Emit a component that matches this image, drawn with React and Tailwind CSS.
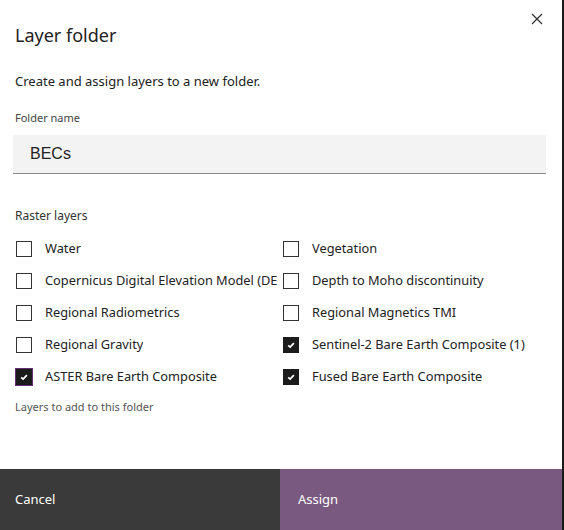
import { useState } from "react";

const layers = [
  ["Water", false, "Vegetation", false],
  ["Copernicus Digital Elevation Model (DEM)", false, "Depth to Moho discontinuity", false],
  ["Regional Radiometrics", false, "Regional Magnetics TMI", false],
  ["Regional Gravity", false, "Sentinel-2 Bare Earth Composite (1)", true],
  ["ASTER Bare Earth Composite", true, "Fused Bare Earth Composite", true],
];

function Check({ checked, focused }) {
  return (
    <span
      className={`w-4 h-4 shrink-0 flex items-center justify-center ${
        checked ? "bg-[#1b1b1b]" : "bg-white border border-[#333]"
      } ${focused ? "outline outline-[1.5px] outline-[#5e3070] outline-offset-[0.5px]" : ""}`}
    >
      {checked && (
        <svg width="10" height="10" viewBox="0 0 10 10" fill="none">
          <path d="M2.2 5.3 L4.1 7.1 L7.9 3.1" stroke="white" strokeWidth="1.7" />
        </svg>
      )}
    </span>
  );
}

function Row({ label, checked, focused }) {
  return (
    <div className="flex items-center h-8 pr-[5px] whitespace-nowrap">
      <Check checked={checked} focused={focused} />
      <span className="ml-[13px] text-[12.8px] text-[#222] overflow-hidden">{label}</span>
    </div>
  );
}

export default function App() {
  const [name] = useState("BECs");
  return (
    <div className="flex w-[564px] h-[530px] bg-[#1a1a1a]" style={{ fontFamily: "'Noto Sans', sans-serif" }}>
      <div className="w-[562px] h-full bg-white flex flex-col">
        {/* header */}
        <div className="relative px-[15px] pt-[23px]">
          <h1 className="text-[18px] text-[#222] leading-6">Layer folder</h1>
          <button className="absolute right-[19px] top-[13px] text-[#333]">
            <svg width="12" height="12" viewBox="0 0 12 12">
              <path d="M1 1 L11 11 M11 1 L1 11" stroke="#333" strokeWidth="1.3" />
            </svg>
          </button>
        </div>

        <p className="px-[15px] mt-[24px] text-[13px] text-[#222] leading-5">
          Create and assign layers to a new folder.
        </p>

        <div className="px-[13px] mt-[19px]">
          <label className="block pl-[2px] text-[11px] text-[#444] leading-4">Folder name</label>
          <div className="mt-[9px] w-[533px] h-[39px] bg-[#f3f3f3] border-b border-[#8a8a8a] flex items-center px-[17px]">
            <span className="text-[16px] text-[#222]" style={{ fontFamily: "'Liberation Sans', Arial, sans-serif" }}>{name}</span>
          </div>
        </div>

        <div className="px-[15px] mt-[34px] text-[12px] text-[#333] leading-4">Raster layers</div>

        <div className="mt-[9px] pl-[16px] grid grid-cols-[267px_1fr]">
          {layers.map(([l, lc, r, rc], i) => (
            <div key={i} className="contents">
              <Row label={l} checked={lc} focused={i === 4} />
              <Row label={r} checked={rc} />
            </div>
          ))}
        </div>

        <div className="px-[15px] mt-[6px] text-[11px] text-[#555] leading-4">Layers to add to this folder</div>

        <div className="mt-auto flex h-[61px]">
          <button className="w-[280px] h-full bg-[#3a3a3a] text-white text-[13px] text-left px-[15px]">Cancel</button>
          <button className="flex-1 h-full bg-[#7a5980] text-white text-[13px] text-left px-[18px]">Assign</button>
        </div>
      </div>
    </div>
  );
}
